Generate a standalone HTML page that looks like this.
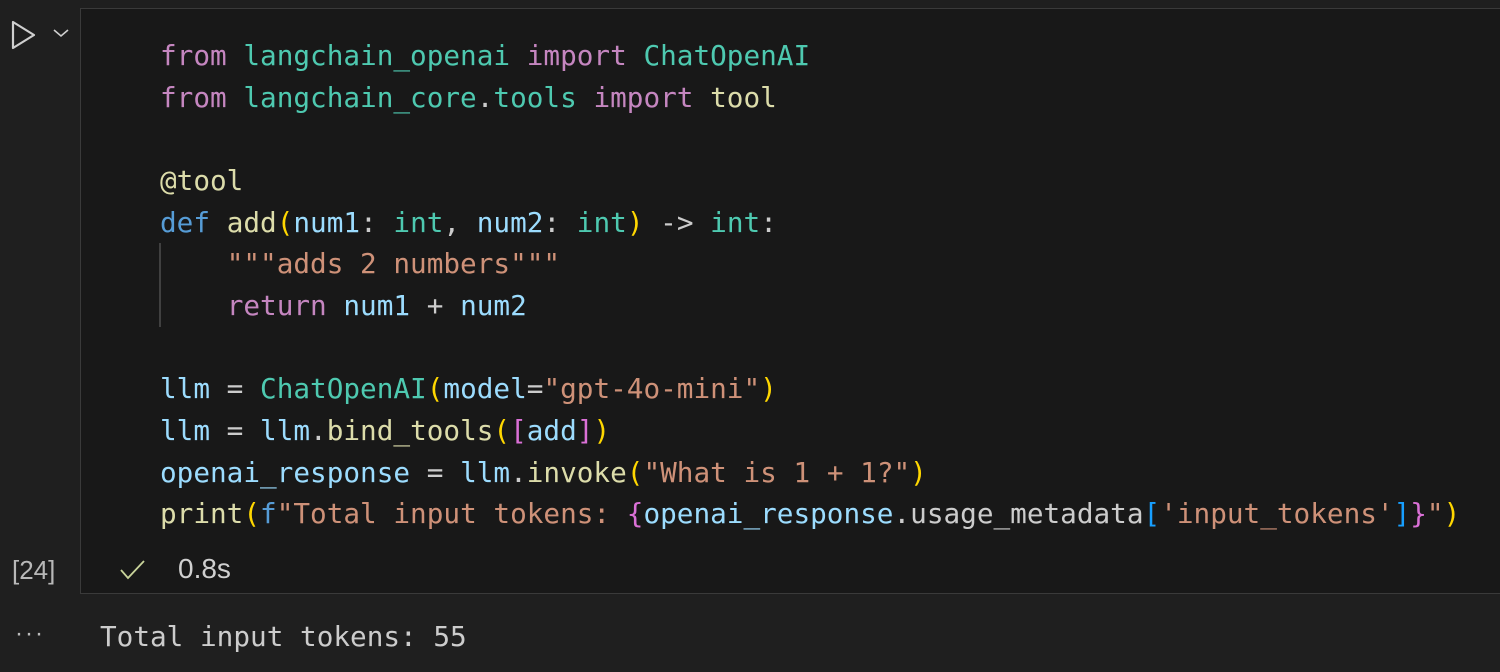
<!DOCTYPE html>
<html><head><meta charset="utf-8"><style>
body{margin:0;width:1500px;height:672px;background:#1f1f1f;overflow:hidden;position:relative;font-family:"DejaVu Sans Mono",monospace;}
.cell{position:absolute;left:80px;top:8px;width:1440px;height:586px;background:#181818;border:1px solid #3a3a3a;box-sizing:border-box;}
pre{position:absolute;left:160px;top:35px;margin:0;font-family:"DejaVu Sans Mono",monospace;font-size:27.7px;line-height:41.65px;color:#cccccc;white-space:pre;}
.k{color:#c586c0}.m{color:#4ec9b0}.f{color:#dcdcaa}.v{color:#9cdcfe}.s{color:#ce9178}.b{color:#569cd6}.y{color:#ffd700}.p{color:#da70d6}.c{color:#179fff}
.guide{position:absolute;left:159px;top:243px;width:2px;height:84px;background:#404040;}
.num{position:absolute;left:12px;top:555px;font-family:"Liberation Sans",sans-serif;font-size:26px;color:#b8b8b8;}
.time{position:absolute;left:178px;top:553px;font-family:"Liberation Sans",sans-serif;font-size:28px;color:#d0d0d0;}
.out{position:absolute;left:100px;top:620px;font-size:27.7px;color:#cccccc;font-family:"DejaVu Sans Mono",monospace;}
.dots{position:absolute;left:15px;top:620px;color:#bbb;font-size:24px;font-family:"Liberation Sans",sans-serif;letter-spacing:2px}
</style></head><body>
<svg style="position:absolute;left:10px;top:20px" width="28" height="30" viewBox="0 0 28 30"><path d="M3 2 L24 15 L3 28 Z" fill="none" stroke="#cfcfcf" stroke-width="2.2" stroke-linejoin="round"/></svg>
<svg style="position:absolute;left:52px;top:27px" width="18" height="12" viewBox="0 0 18 12"><path d="M2 3 L9 9 L16 3" fill="none" stroke="#cfcfcf" stroke-width="1.6"/></svg>
<div class="cell"></div>
<div class="guide"></div>
<pre><span class="k">from</span> <span class="m">langchain_openai</span> <span class="k">import</span> <span class="m">ChatOpenAI</span>
<span class="k">from</span> <span class="m">langchain_core</span>.<span class="m">tools</span> <span class="k">import</span> <span class="f">tool</span>

<span class="f">@tool</span>
<span class="b">def</span> <span class="f">add</span><span class="y">(</span><span class="v">num1</span>: <span class="m">int</span>, <span class="v">num2</span>: <span class="m">int</span><span class="y">)</span> -&gt; <span class="m">int</span>:
    <span class="s">"""adds 2 numbers"""</span>
    <span class="k">return</span> <span class="v">num1</span> + <span class="v">num2</span>

<span class="v">llm</span> = <span class="m">ChatOpenAI</span><span class="y">(</span><span class="v">model</span>=<span class="s">"gpt-4o-mini"</span><span class="y">)</span>
<span class="v">llm</span> = <span class="v">llm</span>.<span class="f">bind_tools</span><span class="y">(</span><span class="p">[</span><span class="v">add</span><span class="p">]</span><span class="y">)</span>
<span class="v">openai_response</span> = <span class="v">llm</span>.<span class="f">invoke</span><span class="y">(</span><span class="s">"What is 1 + 1?"</span><span class="y">)</span>
<span class="f">print</span><span class="y">(</span><span class="b">f</span><span class="s">"Total input tokens: </span><span class="p">{</span><span class="v">openai_response</span>.usage_metadata<span class="c">[</span><span class="s">'input_tokens'</span><span class="c">]</span><span class="p">}</span><span class="s">"</span><span class="y">)</span></pre>
<div class="num">[24]</div>
<svg style="position:absolute;left:118px;top:558px" width="30" height="24" viewBox="0 0 30 24"><path d="M3 12 L10 20 L26 3" fill="none" stroke="#c8d39a" stroke-width="1.8"/></svg>
<div class="time">0.8s</div>
<div class="dots">···</div>
<div class="out">Total input tokens: 55</div>
</body></html>
